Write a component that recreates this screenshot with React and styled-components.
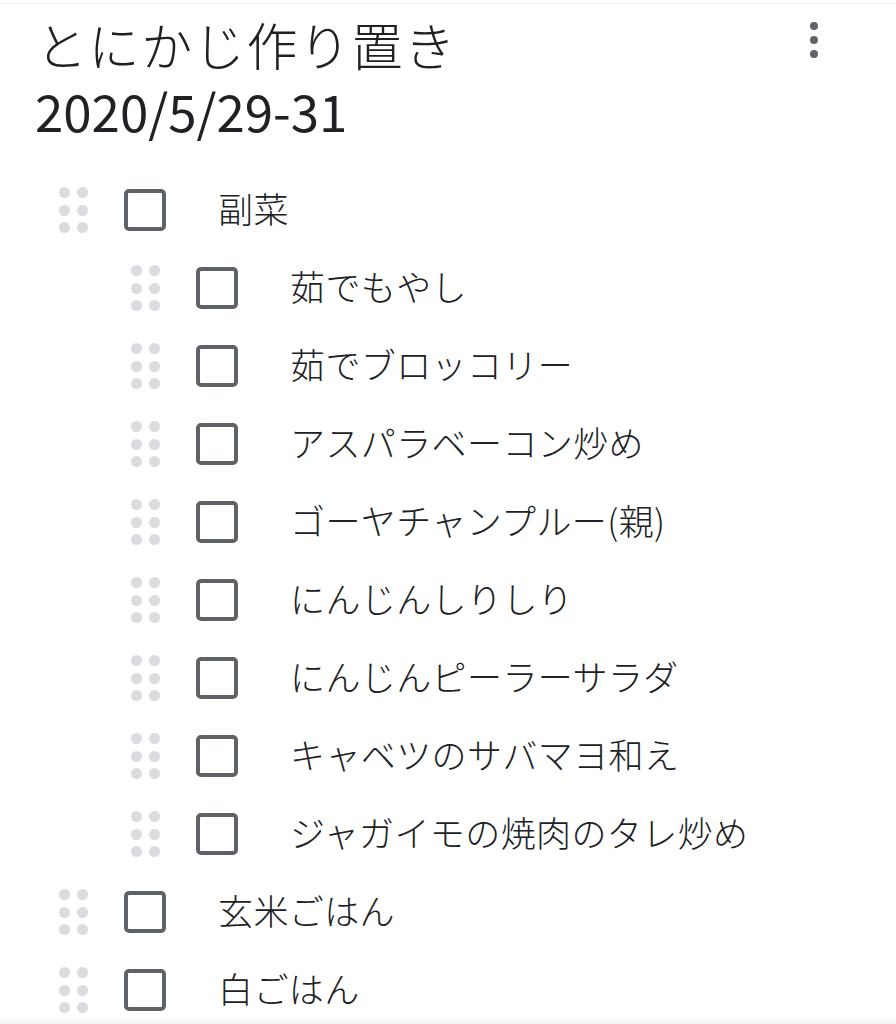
import styled, { createGlobalStyle } from 'styled-components';

const GlobalStyle = createGlobalStyle`
  html, body {
    margin: 0;
    padding: 0;
    background: #ffffff;
  }
  body {
    font-family: "Noto Sans CJK JP", "Noto Sans", sans-serif;
    color: #202124;
  }
`;

const items = [
  { label: '副菜', indent: 0 },
  { label: '茹でもやし', indent: 1 },
  { label: '茹でブロッコリー', indent: 1 },
  { label: 'アスパラベーコン炒め', indent: 1 },
  { label: 'ゴーヤチャンプルー(親)', indent: 1 },
  { label: 'にんじんしりしり', indent: 1 },
  { label: 'にんじんピーラーサラダ', indent: 1 },
  { label: 'キャベツのサバマヨ和え', indent: 1 },
  { label: 'ジャガイモの焼肉のタレ炒め', indent: 1 },
  { label: '玄米ごはん', indent: 0 },
  { label: '白ごはん', indent: 0 },
];

function DragHandle() {
  return (
    <Handle>
      {Array.from({ length: 6 }).map((_, i) => (
        <Dot key={i} />
      ))}
    </Handle>
  );
}

export default function App() {
  return (
    <>
      <GlobalStyle />
      <Card>
        <Header>
          <TitleBlock>
            <Title>とにかじ作り置き</Title>
            <DateLine>2020/5/29-31</DateLine>
          </TitleBlock>
          <MenuButton aria-label="menu">
            <MenuDot />
            <MenuDot />
            <MenuDot />
          </MenuButton>
        </Header>
        <List>
          {items.map((item) => (
            <Row key={item.label} $indent={item.indent}>
              <DragHandle />
              <Checkbox />
              <Label>{item.label}</Label>
            </Row>
          ))}
        </List>
        <BottomFade />
      </Card>
    </>
  );
}

const Card = styled.div`
  position: relative;
  width: 896px;
  height: 1024px;
  overflow: hidden;
  box-sizing: border-box;
  border-top: 1px solid #f0f0f0;
  margin-top: 3px;
`;

const Header = styled.div`
  display: flex;
  justify-content: space-between;
  align-items: flex-start;
  padding: 15px 0 0 36px;
`;

const TitleBlock = styled.div`
  display: flex;
  flex-direction: column;
`;

const Title = styled.h1`
  margin: 0;
  font-size: 51px;
  font-weight: 300;
  line-height: 50px;
  color: #202124;
  letter-spacing: 1.6px;
`;

const DateLine = styled.div`
  margin-top: 16px;
  margin-left: -1px;
  font-size: 51px;
  line-height: 50px;
  font-weight: 400;
  color: #202124;
`;

const MenuButton = styled.div`
  display: flex;
  flex-direction: column;
  align-items: center;
  gap: 6px;
  margin: 3px 78px 0 0;
`;

const MenuDot = styled.span`
  width: 8px;
  height: 8px;
  border-radius: 50%;
  background: #5f6368;
`;

const List = styled.div`
  display: flex;
  flex-direction: column;
  margin-top: 36px;
`;

const Row = styled.div`
  display: flex;
  align-items: center;
  height: 78px;
  padding-left: ${(p) => 59 + p.$indent * 72}px;
`;

const Handle = styled.div`
  display: grid;
  grid-template-columns: repeat(2, 11px);
  grid-auto-rows: 11px;
  column-gap: 7px;
  row-gap: 6.5px;
  margin-right: 36px;
`;

const Dot = styled.span`
  width: 11px;
  height: 11px;
  border-radius: 50%;
  background: #dadce0;
`;

const Checkbox = styled.span`
  flex: none;
  box-sizing: border-box;
  width: 42px;
  height: 42px;
  border: 4px solid #5f6368;
  border-radius: 5px;
  margin-right: 52px;
`;

const Label = styled.span`
  font-size: 35px;
  font-weight: 300;
  line-height: 40px;
  letter-spacing: 0.4px;
  color: #202124;
  white-space: nowrap;
  transform: translateY(-2px);
`;

const BottomFade = styled.div`
  position: absolute;
  left: 0;
  right: 0;
  bottom: 0;
  height: 12px;
  background: linear-gradient(to bottom, rgba(240, 240, 240, 0), rgba(238, 238, 238, 0.9));
`;
